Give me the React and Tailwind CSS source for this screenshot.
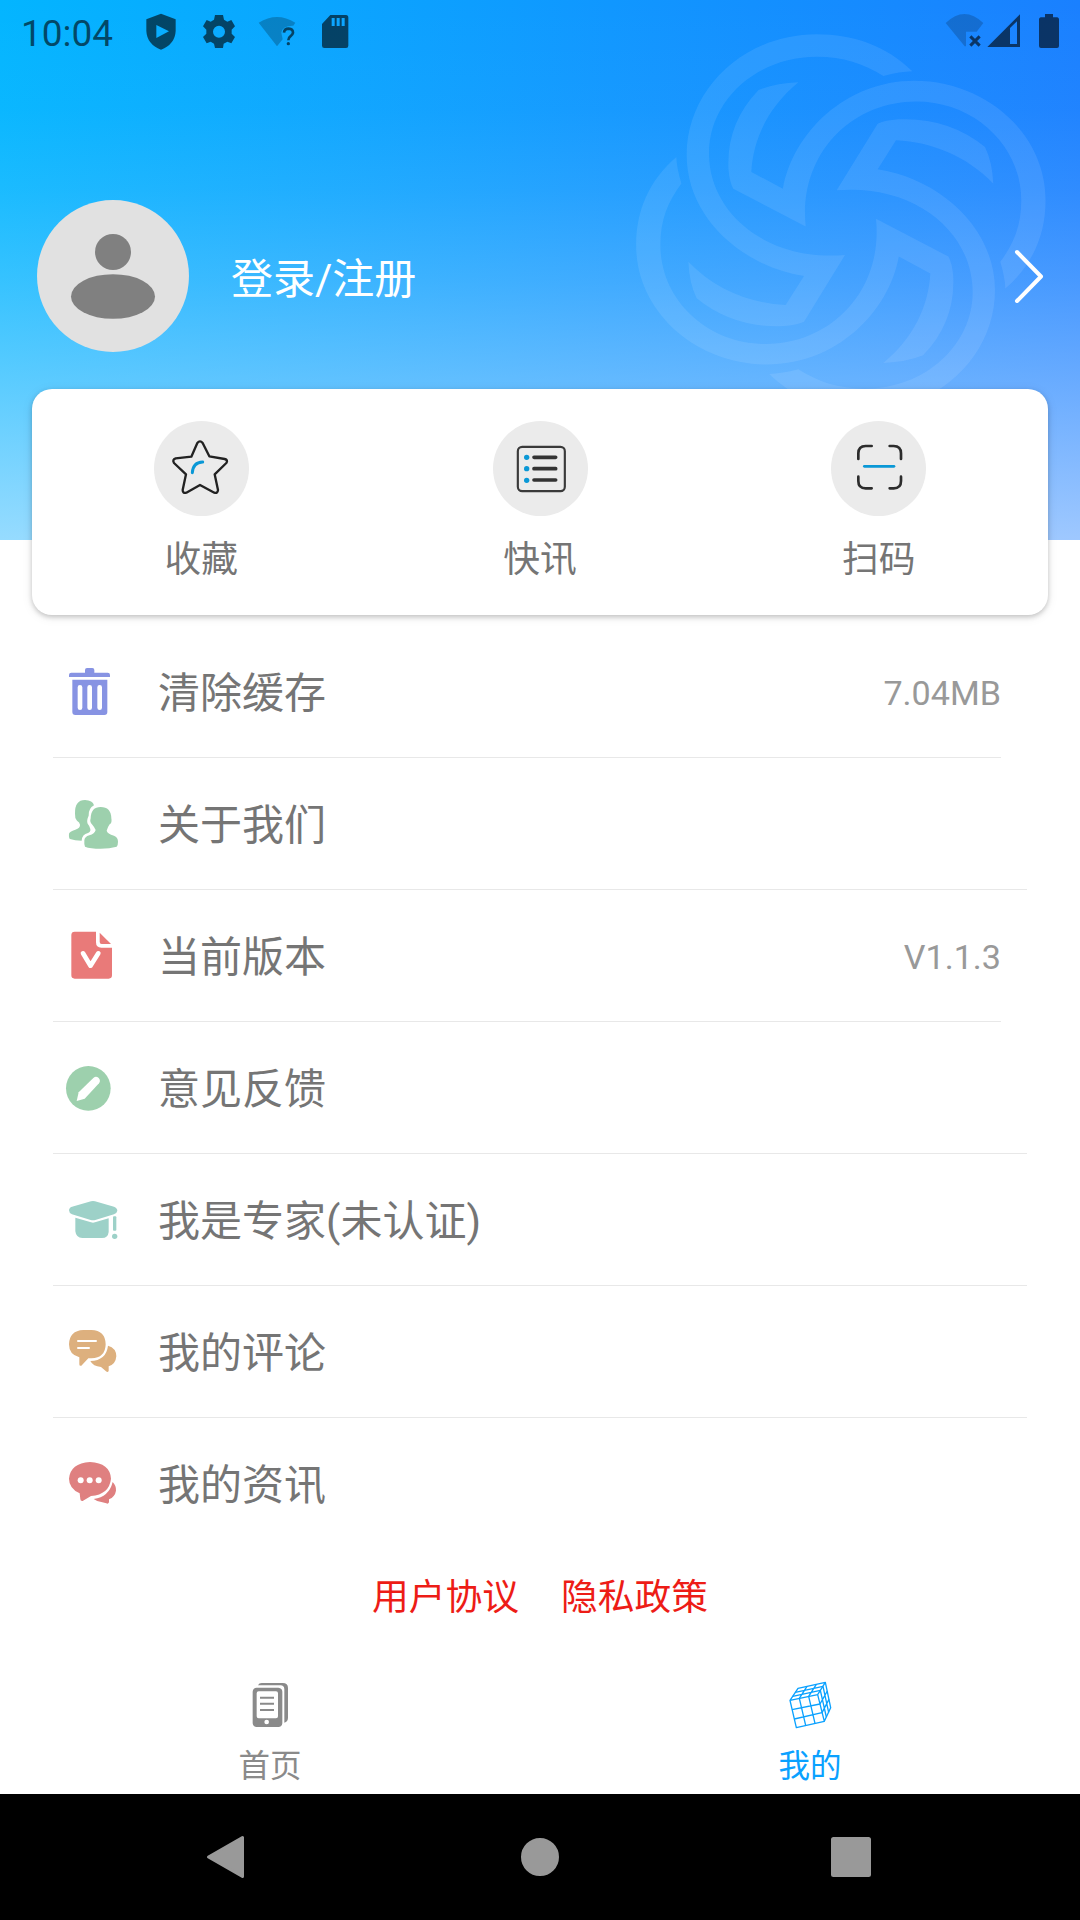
import React, { useState } from 'react';

const SWIRL_ARM =
  'M937 214C860 138 760 103 650 103C430 103 260 270 260 465C260 655 430 800 612 828L557 915C450 910 345 868 265 785Q268 850 290 895Q400 985 550 978Q590 975 612 965L735 765C500 785 327 640 327 460C327 300 470 170 650 170C730 170 790 190 850 228Q900 215 937 214Z';

const Swirl = () => (
  <svg className="absolute top-0 right-0 w-[480px] h-[400px]" viewBox="0 0 1440 1200" fill="#fff" fillOpacity="0.09">
    {[0, 90, 180, 270].map((angle) => (
      <path
        key={angle}
        d={SWIRL_ARM}
        transform={`translate(722.5 668) scale(1 .92) rotate(${angle}) scale(1 1.087) translate(-722.5 -668)`}
      />
    ))}
  </svg>
);

const StatusBar = () => (
  <div className="relative flex h-[70px] justify-between pl-[21px] pr-5 text-black/60">
    <div className="flex">
      <span className="w-[124px] pt-1.5 text-[37px] leading-[56px]">10:04</span>
      <svg className="w-8 h-[70px]" viewBox="435 0 96 210" fill="currentColor">
        <path fillRule="evenodd" d="M483 41L527 58V93Q525 133 483 149Q441 133 439 93V58ZM469 75V114L507 94Z" />
      </svg>
      <svg className="ml-[25px] w-[34px] h-[70px]" viewBox="606 0 102 210" fill="currentColor">
        <path fillRule="evenodd" d="M645 45H669L672 59L682 65L694 60L705 79L695 89V101L705 111L694 130L682 125L671 131L669 144H645L642 131L632 125L620 130L609 111L619 101V89L609 79L620 60L632 65L642 59ZM657 77A18 18 0 1 0 657 113A18 18 0 1 0 657 77Z" />
      </svg>
      <svg className="ml-[22px] w-[39px] h-[70px]" viewBox="774 0 117 210" fill="none">
        <path d="M776 68Q831 34 886 68L880 77Q848 76 844 98L848 118L831 139Z" fill="currentColor" fillOpacity="0.38" />
        <path d="M852 98Q853 86 866 86Q879 87 879 98Q878 104 871 109Q865 113 865 121" stroke="currentColor" strokeWidth="8" />
        <circle cx="865" cy="131" r="5" fill="currentColor" />
      </svg>
      <svg className="ml-6 w-7 h-[70px]" viewBox="963 0 84 210" fill="currentColor">
        <path fillRule="evenodd" d="M991 45H1038Q1045 45 1045 53V137Q1045 144 1038 144H973Q966 144 966 137V72ZM995 54V78H1004V54ZM1010 54V78H1019V54ZM1025 54V78H1034V54Z" />
      </svg>
    </div>
    <div className="flex">
      <svg className="w-[39px] h-[70px]" viewBox="135 0 117 210">
        <path d="M137 69Q193 15 250 69L230 95H198V139H194Z" fill="currentColor" fillOpacity="0.3" />
        <path d="M211 109L239 137M239 109L211 137" stroke="currentColor" strokeWidth="9" />
      </svg>
      <svg className="ml-[3px] w-[34px] h-[70px]" viewBox="261 0 102 210" fill="currentColor">
        <path fillRule="evenodd" d="M262 141L360 43V141ZM330 84V132H351V64Z" />
      </svg>
      <svg className="ml-[17px] w-[22px] h-[70px]" viewBox="414 0 66 210" fill="currentColor">
        <path d="M435 42H459V52H472Q477 53 477 58V138Q477 144 471 144H423Q417 144 417 138V58Q417 53 422 52H435Z" />
      </svg>
    </div>
  </div>
);

const Avatar = () => (
  <svg className="w-[152px] h-[152px]" viewBox="111 60 456 456">
    <circle cx="339" cy="288" r="228" fill="#e1e1e1" />
    <circle cx="339" cy="216" r="54" fill="#808080" />
    <ellipse cx="339" cy="349.500" rx="126" ry="67" fill="#808080" />
  </svg>
);

const StarIcon = () => (
  <svg className="w-full h-full" viewBox="72 63 285 285" fill="none" strokeLinecap="round" strokeLinejoin="round">
    <path
      d="M202 129Q210 119 218 129L238 169L284 177Q295 180 289 189L254 223L264 270Q263 281 253 278L210 255L169 278Q158 281 158 270L168 223L132 189Q126 179 137 175L184 170Z"
      stroke="#222"
      strokeWidth="7"
    />
    <path d="M187 218Q189 187 218 186" stroke="#0a98d6" strokeWidth="9" />
  </svg>
);

const NewsIcon = () => (
  <svg className="w-full h-full" viewBox="1089 63 285 285" fill="none" strokeLinecap="round">
    <rect x="1163.500" y="140.500" width="141" height="133" rx="13" stroke="#3a3a3a" strokeWidth="6.500" />
    <path d="M1212 172H1277M1212 206H1277M1212 240H1277" stroke="#333" strokeWidth="11" />
    <g fill="#0a98d6">
      <circle cx="1190" cy="172" r="8" />
      <circle cx="1190" cy="206" r="8" />
      <circle cx="1190" cy="241" r="8" />
    </g>
  </svg>
);

const ScanIcon = () => (
  <svg className="w-full h-full" viewBox="153 123 285 285" fill="none" strokeLinecap="round" strokeWidth="8">
    <path d="M235 237V220Q235 198 257 198H275M329 198H341Q363 198 363 220V237M363 290V303Q363 325 341 325H329M275 325H257Q235 325 235 303V290" stroke="#2c2c2c" />
    <path d="M253 259H342" stroke="#0a98d6" />
  </svg>
);

const shortcuts = [
  { label: '收藏', Icon: StarIcon },
  { label: '快讯', Icon: NewsIcon },
  { label: '扫码', Icon: ScanIcon },
];

const menuItems = [
  {
    label: '清除缓存',
    value: '7.04MB',
    icon: (
      <svg className="w-[55px] h-[55px]" viewBox="75 72 165 165" fill="#8793e3">
        <path d="M135 98V90Q135 84 141 84H157Q163 84 163 90V98H203Q210 98 210 105V111H87V105Q87 98 94 98Z" />
        <path fillRule="evenodd" d="M97 119H202V216Q202 225 193 225H106Q97 225 97 216ZM113 142V203A7 7 0 0 0 127 203V142A7 7 0 0 0 113 142ZM142 142V203A7 7 0 0 0 156 203V142A7 7 0 0 0 142 142ZM172 142V203A7 7 0 0 0 186 203V142A7 7 0 0 0 172 142Z" />
      </svg>
    ),
  },
  {
    label: '关于我们',
    icon: (
      <svg className="w-[55px] h-[55px]" viewBox="75 468 165 165" fill="#9dd0ad">
        <path d="M105 521Q104 480 135 480Q158 481 162 496Q145 505 146 527Q139 541 143 551Q150 559 151 567Q153 575 144 579Q126 583 125 602Q104 602 90 597Q86 594 87 581Q88 575 106 569Q121 564 120 554Q119 546 111 542Q104 534 105 521Z" />
        <path d="M182 501Q213 501 214 535Q217 549 209 553Q202 563 200 572Q202 581 222 587Q234 592 234 605Q234 616 230 620Q209 626 182 626Q151 626 135 620Q132 614 133 601Q134 590 148 586Q164 582 167 570Q164 562 157 554Q148 547 152 535Q153 501 182 501Z" />
      </svg>
    ),
  },
  {
    label: '当前版本',
    value: 'V1.1.3',
    icon: (
      <svg className="w-[55px] h-[55px]" viewBox="75 864 165 165" fill="#e97a79">
        <path d="M104 875H168V907Q168 923 184 923H216V1006Q216 1016 206 1016H104Q94 1016 94 1006V885Q94 875 104 875Z" />
        <path d="M179 878L213 912H185Q179 912 179 905Z" />
        <path d="M129 940L151.500 977L175 940" fill="none" stroke="#fff" strokeWidth="14" strokeLinecap="round" strokeLinejoin="round" />
      </svg>
    ),
  },
  {
    label: '意见反馈',
    icon: (
      <svg className="w-[55px] h-[55px]" viewBox="75 90 165 165">
        <circle cx="145" cy="175" r="67" fill="#9dd0ad" />
        <path d="M110 213L116 187L160 144Q168 137 176 144Q183 152 177 160L134 206Z" fill="#fff" />
      </svg>
    ),
  },
  {
    label: '我是专家(未认证)',
    icon: (
      <svg className="w-[55px] h-[55px]" viewBox="75 486 165 165" fill="#9dd1c8">
        <path d="M153 514Q159 512 165 514L222 530Q232 534 232 542Q231 549 222 553L166 570Q159 572 152 570L96 553Q87 549 87 541Q87 533 96 530Z" />
        <path d="M106 563L153 577Q159 579 165 577L206 565V606Q204 624 186 624H127Q108 623 106 604Z" />
        <rect x="219" y="559" width="10" height="43" rx="3" />
        <circle cx="224" cy="619" r="8" />
      </svg>
    ),
  },
  {
    label: '我的评论',
    icon: (
      <svg className="w-[55px] h-[55px]" viewBox="75 882 165 165" fill="#ddb07e">
        <path d="M130 900H154Q196 901 197 943Q196 984 154 985H145L124 1007Q118 1009 118 1003V982Q87 974 87 943Q88 902 130 900Z" />
        <path d="M204 947Q229 954 229 979Q227 1003 206 1009V1023Q203 1028 198 1024L183 1011Q159 1009 151 993Q199 991 204 947Z" />
        <path d="M114 933H168M114 954H147" stroke="#fff" strokeWidth="6" strokeLinecap="round" />
      </svg>
    ),
  },
  {
    label: '我的资讯',
    icon: (
      <svg className="w-[55px] h-[55px]" viewBox="75 468 165 165" fill="#df8080">
        <path d="M150 486Q210 489 213 536Q208 583 153 588L128 603Q121 604 121 597L119 580Q87 565 87 536Q91 490 150 486Z" />
        <path d="M218 546Q229 557 228 572Q225 590 207 598V607Q204 613 199 610L187 607Q171 605 161 597Q207 591 218 546Z" />
        <g fill="#fff">
          <circle cx="122" cy="541" r="9" />
          <circle cx="149" cy="541" r="9" />
          <circle cx="176" cy="541" r="9" />
        </g>
      </svg>
    ),
  },
];

const HomeTabIcon = () => (
  <svg className="w-10 h-12" viewBox="150 63 120 144" fill="currentColor">
    <path fillRule="evenodd" d="M170 83H235Q247 84 247 95V190Q246 201 235 201H170Q159 200 158 190V95Q159 84 170 83ZM176 94Q170 94 170 100V169Q170 175 176 175H228Q234 175 234 169V100Q234 94 228 94ZM200 179A7 7 0 1 0 200 193A7 7 0 1 0 200 179Z" />
    <path d="M180 110H222V116H180ZM180 128H222V134H180ZM180 147H222V153H180Z" />
    <path d="M174 76Q177 69 185 69H248Q264 69 264 84V173Q264 185 253 188V87Q252 76 242 76Z" />
  </svg>
);

const CubeTabIcon = () => (
  <svg className="w-[44px] h-12" viewBox="114 63 132 144" fill="none" stroke="currentColor" strokeWidth="4" strokeLinejoin="round">
    <path d="M120 121L203 104L223 184L139 203ZM120 121L144 85L226 67L242 143L223 184M203 104L226 67" />
    <path d="M126 149L210 132M133 177L216 158M148 115L167 196M176 109L195 190" />
    <path d="M128 109L211 91M136 97L219 79M148 115L171 79M176 109L199 73" />
    <path d="M211 91L229 171M219 79L236 157M210 132L232 93M216 158L237 118" />
  </svg>
);

const tabs = [
  { key: 'home', label: '首页', Icon: HomeTabIcon },
  { key: 'mine', label: '我的', Icon: CubeTabIcon },
];

const App = () => {
  const [activeTab, setActiveTab] = useState('mine');

  return (
    <div className="flex flex-col w-[1080px] h-[1920px] overflow-hidden bg-white font-[Roboto,'Noto_Sans_CJK_SC',sans-serif] text-[#757575]">
      {/* Header */}
      <header className="relative h-[540px] shrink-0 overflow-hidden bg-[linear-gradient(to_bottom,rgba(236,242,255,0)_0%,rgba(236,242,255,0.03)_20%,rgba(236,242,255,0.1)_35%,rgba(236,242,255,0.22)_52%,rgba(236,242,255,0.39)_72%,rgba(236,242,255,0.63)_100%),linear-gradient(to_right,#03b5ff,#1a80ff)]">
        <Swirl />
        <StatusBar />
        <div className="relative flex items-center pt-[130px] pl-[37px] pr-9">
          <Avatar />
          <span className="ml-[42px] flex-1 pt-[7px] text-[42px] leading-[56px] text-white">登录/注册</span>
          <svg className="w-8 h-[54px]" viewBox="0 0 32 54" fill="none" stroke="#fff" strokeWidth="4" strokeLinecap="round" strokeLinejoin="round">
            <path d="M5 3L29 27.500L5 52" />
          </svg>
        </div>
      </header>

      {/* Shortcuts */}
      <section className="relative -mt-[151px] mx-8 flex h-[226px] shrink-0 rounded-[20px] bg-white shadow-[0_2px_5px_rgba(0,0,0,0.2),0_2px_12px_rgba(0,0,0,0.08)]">
        {shortcuts.map(({ label, Icon }) => (
          <button key={label} className="flex flex-1 flex-col items-center pt-8">
            <span className="w-[95px] h-[95px] rounded-full bg-[#ebebeb]">
              <Icon />
            </span>
            <span className="mt-[17px] text-[36.75px] leading-[54px]">{label}</span>
          </button>
        ))}
      </section>

      {/* Menu */}
      <ul className="mt-[11px] shrink-0">
        {menuItems.map(({ label, value, icon }, index) => (
          <li
            key={label}
            className={`ml-[53px] flex h-[132px] items-center pl-3 ${value ? 'mr-[79px]' : 'mr-[53px]'} ${
              index < menuItems.length - 1 ? 'border-b border-[#e8e8e8]' : 'pb-px'
            }`}
          >
            {icon}
            <span className="ml-[38px] flex-1 pt-[5px] text-[42px] leading-[60px]">{label}</span>
            {value && <span className="pt-0.5 text-[34.125px] leading-10 text-[#999]">{value}</span>}
          </li>
        ))}
      </ul>

      {/* Agreements */}
      <div className="mt-[21px] flex justify-center gap-[42px] text-[36.75px] leading-[54px] text-[#ed1c16]">
        <a>用户协议</a>
        <a>隐私政策</a>
      </div>

      {/* Tab bar */}
      <nav className="mt-auto flex h-[113px] shrink-0">
        {tabs.map(({ key, label, Icon }) => (
          <button
            key={key}
            onClick={() => setActiveTab(key)}
            className={`flex flex-1 flex-col items-center ${activeTab === key ? 'text-[#0aa1ff]' : 'text-[#8a8a8a]'}`}
          >
            <Icon />
            <span className="mt-[15px] text-[31.5px] leading-[46px]">{label}</span>
          </button>
        ))}
      </nav>

      {/* System navigation */}
      <footer className="flex h-[126px] shrink-0 items-center bg-black">
        <svg className="w-full h-full" viewBox="0 0 1080 126" fill="#999" stroke="#999" strokeWidth="3" strokeLinejoin="round">
          <path d="M208.500 63L242.500 43.500V82.500Z" />
          <circle cx="540" cy="63" r="17.500" />
          <rect x="832.500" y="44.500" width="37" height="37" rx="1" />
        </svg>
      </footer>
    </div>
  );
};

export default App;
